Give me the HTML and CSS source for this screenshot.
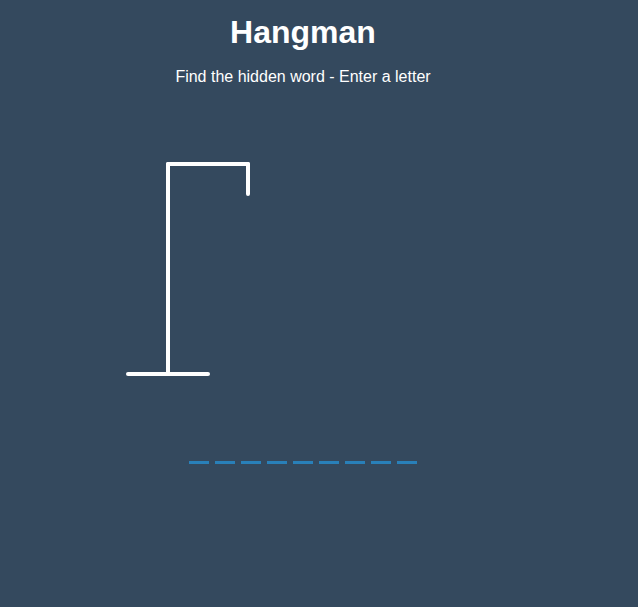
FILE: index.html
```html
<!DOCTYPE html>
<html lang="en">
<head>
<meta charset="UTF-8">
<title>Hangman</title>
<link rel="stylesheet" href="styles.css">
</head>
<body>
<div class="page">
  <h1 class="title">Hangman</h1>
  <p class="subtitle">Find the hidden word - Enter a letter</p>
  <div class="game">
    <svg class="figure" width="200" height="250" viewBox="0 0 200 250">
      <line x1="60" y1="20" x2="140" y2="20"/>
      <line x1="140" y1="20" x2="140" y2="50"/>
      <line x1="60" y1="20" x2="60" y2="230"/>
      <line x1="20" y1="230" x2="100" y2="230"/>
    </svg>
    <div class="word">
      <span class="letter"></span><span class="letter"></span><span class="letter"></span><span class="letter"></span><span class="letter"></span><span class="letter"></span><span class="letter"></span><span class="letter"></span><span class="letter"></span>
    </div>
  </div>
</div>
</body>
</html>
```
FILE: styles.css
```css
html, body {
  margin: 0;
  background: #34495e;
  color: #fff;
  font-family: "Liberation Sans", Arial, Helvetica, sans-serif;
  height: 100%;
  overflow: hidden;
}
.page {
  width: 606px;
  display: flex;
  flex-direction: column;
  align-items: center;
}
.title {
  margin: 14px 0 0;
  font-size: 32px;
  font-weight: bold;
}
.subtitle {
  margin: 17px 0 0;
  font-size: 16px;
}
.game {
  width: 390px;
  margin-top: 58px;
  display: flex;
  flex-direction: column;
}
.figure {
  display: block;
  fill: transparent;
  stroke: #fff;
  stroke-width: 4px;
  stroke-linecap: round;
}
.word {
  display: flex;
  align-self: center;
  margin-top: 20px;
}
.letter {
  width: 20px;
  height: 50px;
  margin: 0 3px;
  border-bottom: 3px solid #2980b9;
  box-sizing: border-box;
}
```
